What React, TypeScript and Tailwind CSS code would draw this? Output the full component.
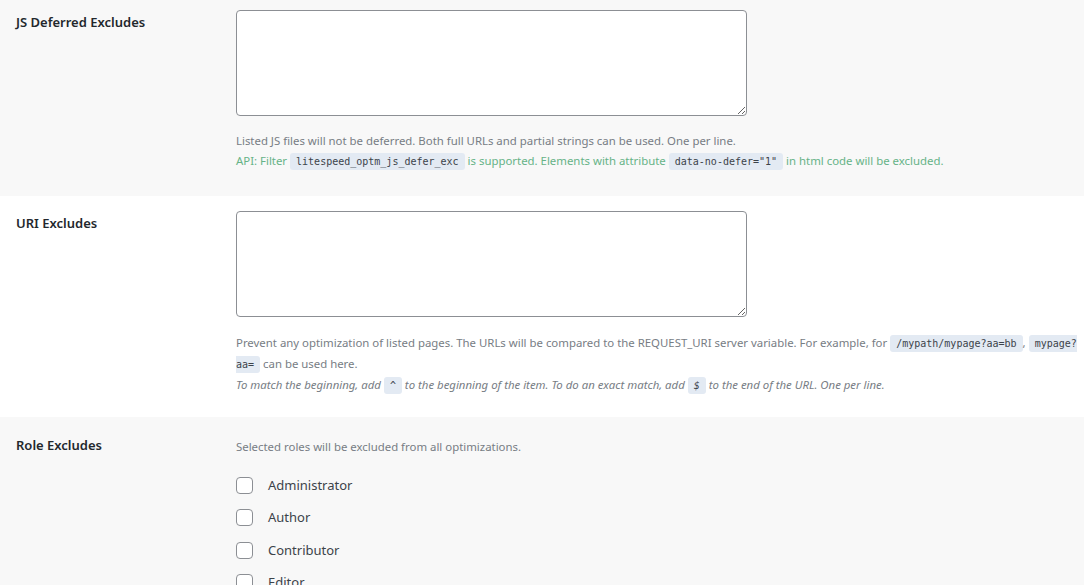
import React from "react";

const Code = ({ children }: { children: React.ReactNode }) => (
  <code className="bg-[#e3eaf3] text-[#3c434a] px-[6px] py-[3px] rounded-[3px] font-['DejaVu_Sans_Mono','Liberation_Mono',monospace] text-[10px] leading-none [box-decoration-break:slice]">
    {children}
  </code>
);

const TextArea = () => (
  <textarea className="block w-[511px] h-[106px] bg-white border border-[#8c8f94] rounded-[4px] resize" />
);

export default function App() {
  const roles = ["Administrator", "Author", "Contributor", "Editor"];
  return (
    <div className="w-[1084px] h-[585px] overflow-hidden bg-white font-['Noto_Sans','Open_Sans',sans-serif]">
      {/* Row 1 */}
      <div className="flex bg-[#f8f8f8] pt-[10px] pb-[25px]">
        <div className="w-[236px] shrink-0 pl-4 pt-[2px] text-[13px] leading-[20px] font-semibold text-[#23282d]">
          JS Deferred Excludes
        </div>
        <div>
          <TextArea />
          <div className="mt-[15px] text-[11.4px] leading-[20px]">
            <div className="text-[#777d84]">
              Listed JS files will not be deferred. Both full URLs and partial strings can be used. One per line.
            </div>
            <div className="text-[#66b387]">
              API: Filter <Code>litespeed_optm_js_defer_exc</Code> is supported. Elements with attribute{" "}
              <Code>data-no-defer="1"</Code> in html code will be excluded.
            </div>
          </div>
        </div>
      </div>

      {/* Row 2 */}
      <div className="flex bg-white pt-[15px] pb-[22px]">
        <div className="w-[236px] shrink-0 pl-4 pt-[2px] text-[13px] leading-[20px] font-semibold text-[#23282d]">
          URI Excludes
        </div>
        <div>
          <TextArea />
          <div className="mt-[15px] text-[11.4px] leading-[21px] text-[#777d84] whitespace-nowrap">
            <div>
              Prevent any optimization of listed pages. The URLs will be compared to the REQUEST_URI server variable. For example, for{" "}
              <Code>/mypath/mypage?aa=bb</Code>, <Code>mypage?<br />aa=</Code> can be used here.
            </div>
            <div className="italic">
              To match the beginning, add <Code>^</Code> to the beginning of the item. To do an exact match, add{" "}
              <Code>$</Code> to the end of the URL. One per line.
            </div>
          </div>
        </div>
      </div>

      {/* Row 3 */}
      <div className="flex bg-[#f8f8f8] pt-[18px]">
        <div className="w-[236px] shrink-0 pl-4 text-[13px] leading-[20px] font-semibold text-[#23282d]">
          Role Excludes
        </div>
        <div className="pt-[2px]">
          <div className="text-[11.4px] leading-[20px] text-[#777d84]">
            Selected roles will be excluded from all optimizations.
          </div>
          <div className="mt-[12px] flex flex-col">
            {roles.map((r) => (
              <div key={r} className="h-[32.5px] flex items-center">
                <span className="w-[17px] h-[17px] border border-[#8c8f94] rounded-[4px] bg-white shrink-0" />
                <span className="ml-[15px] text-[13px] text-[#3c434a]">{r}</span>
              </div>
            ))}
          </div>
        </div>
      </div>
    </div>
  );
}
